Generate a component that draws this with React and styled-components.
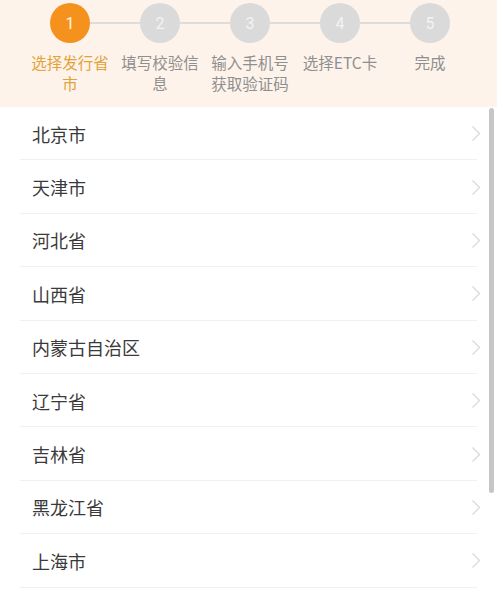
import React from "react";
import styled, { createGlobalStyle } from "styled-components";

const Global = createGlobalStyle`
  html, body { margin: 0; padding: 0; background: #ffffff; }
  body { font-family: "Noto Sans CJK SC", "Noto Sans", sans-serif; }
  * { box-sizing: border-box; }
`;

const Page = styled.div`
  width: 497px;
  height: 600px;
  overflow: hidden;
  position: relative;
  background: #fff;
`;

const Header = styled.div`
  height: 107px;
  background: #fdf3ea;
  display: flex;
  padding: 3px 22px 0 25px;
`;

const Step = styled.div`
  width: 90px;
  display: flex;
  flex-direction: column;
  align-items: center;
  position: relative;
`;

const CircleRow = styled.div`
  width: 100%;
  height: 40px;
  display: flex;
  align-items: center;
  justify-content: center;
  position: relative;
`;

const Connector = styled.div`
  position: absolute;
  top: 19px;
  height: 2px;
  width: 50px;
  left: 65px;
  background: #dedcda;
`;

const Circle = styled.div`
  width: 40px;
  height: 40px;
  border-radius: 50%;
  background: ${(p) => (p.$active ? "#f5921e" : "#dadada")};
  color: ${(p) => (p.$active ? "#fff6e0" : "#f3f3f3")};
  display: flex;
  align-items: center;
  justify-content: center;
  font-family: "Roboto", "Liberation Sans", sans-serif;
  font-size: 16px;
  position: relative;
  z-index: 1;
`;

const Label = styled.div`
  margin-top: 9px;
  width: 90px;
  text-align: center;
  font-size: 15.5px;
  line-height: 21px;
  color: ${(p) => (p.$active ? "#e3a23a" : "#8f8f8f")};
  font-family: "Noto Sans CJK SC", "Liberation Sans", sans-serif;
`;

const List = styled.div`
  background: #fff;
`;

const Row = styled.div`
  height: 53.4px;
  display: flex;
  align-items: center;
  padding-left: 32px;
  padding-right: 16px;
  position: relative;
  &::after {
    content: "";
    position: absolute;
    left: 20px;
    right: 20px;
    bottom: 0;
    height: 1px;
    background: #f1f1f1;
  }
`;

const Name = styled.span`
  flex: 1;
  font-size: 18px;
  color: #3a3a3a;
  font-family: "Noto Sans CJK SC", sans-serif;
`;

const Chevron = styled.svg`
  width: 10px;
  height: 17px;
`;

const Scrollbar = styled.div`
  position: absolute;
  right: 3px;
  top: 108px;
  width: 5px;
  height: 385px;
  border-radius: 3px;
  background: #c6c6c6;
`;

const steps = [
  { n: 1, label: "选择发行省市" },
  { n: 2, label: "填写校验信息" },
  { n: 3, label: "输入手机号获取验证码" },
  { n: 4, label: "选择ETC卡" },
  { n: 5, label: "完成" },
];

const provinces = [
  "北京市",
  "天津市",
  "河北省",
  "山西省",
  "内蒙古自治区",
  "辽宁省",
  "吉林省",
  "黑龙江省",
  "上海市",
];

export default function App() {
  return (
    <Page>
      <Global />
      <Header>
        {steps.map((s, i) => (
          <Step key={s.n}>
            <CircleRow>
              <Circle $active={i === 0}>{s.n}</Circle>
              {i < steps.length - 1 && <Connector />}
            </CircleRow>
            <Label $active={i === 0}>{s.label}</Label>
          </Step>
        ))}
      </Header>
      <List>
        {provinces.map((p) => (
          <Row key={p}>
            <Name>{p}</Name>
            <Chevron viewBox="0 0 10 17" fill="none">
              <path d="M1.5 1.5 L8.5 8.5 L1.5 15.5" stroke="#d9d9d9" strokeWidth="1.3" />
            </Chevron>
          </Row>
        ))}
      </List>
      <Scrollbar />
    </Page>
  );
}
